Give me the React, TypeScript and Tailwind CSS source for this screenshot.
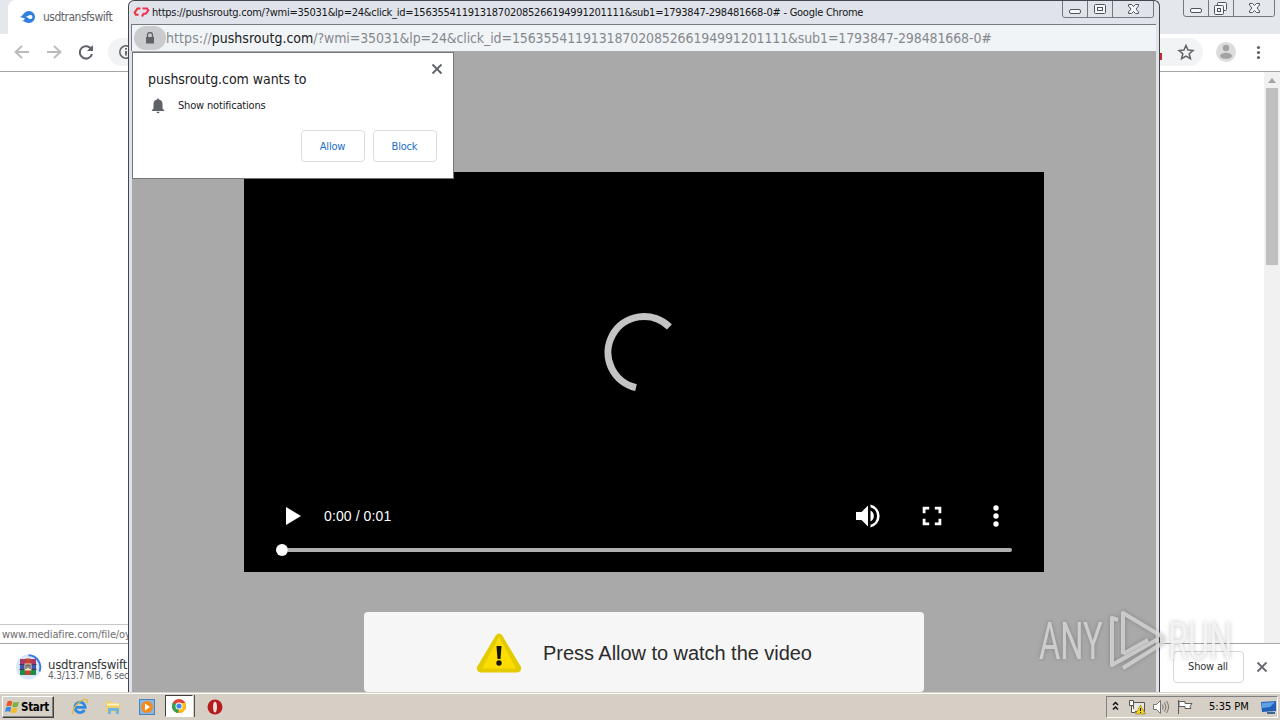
import type { ReactNode } from "react";

const QUERY = "wmi=35031&lp=24&click_id=15635541191318702085266194991201111&sub1=1793847-298481668-0#";

function CaptionButtons({ restore }: { restore?: boolean }) {
  return (
    <svg className="block" width="94" height="18" viewBox="0 0 94 18" fill="none" stroke="#50545e">
      <path d="M1.500 0V14Q1.500 16.500 4 16.500H90.500Q92.500 16.500 92.500 14V0M26.500 0V16M51.500 0V16" stroke="#73777f" />
      <rect x="8.500" y="8.500" width="11" height="4" rx="1.500" fill="#f7f8fa" />
      {restore ? (
        <g fill="#f7f8fa">
          <rect x="35.500" y="2.500" width="9" height="8" rx="1" />
          <rect x="32.500" y="5.500" width="9" height="9" rx="1" />
          <rect x="35.500" y="8.500" width="3" height="3" />
        </g>
      ) : (
        <g fill="#f7f8fa">
          <rect x="33.500" y="3.500" width="11" height="9" rx="1" />
          <rect x="36.500" y="6.500" width="5" height="3" />
        </g>
      )}
      <path d="M67.500 3.500H70.500L72.500 5.500L74.500 3.500H77.500V5L75 8L77.500 11V12.500H74.500L72.500 10.500L70.500 12.500H67.500V11L70 8L67.500 5Z" fill="#f7f8fa" />
    </svg>
  );
}

function MediafireIcon() {
  return (
    <svg width="16" height="14" viewBox="0 0 16 14">
      <path d="M0 7C3 6 4 1 9 1a6 6 0 0 1 0 12C6 13 4 11 2 11c2-.5 2-1.500 3-2.500C3.500 8 2 7.500 0 7z" fill="#2f7fdd" />
      <path d="M5.500 6.500c2 .5 3-1.500 5-1.500a2 2 0 0 1 0 4c-2 0-3-2-5-2.500z" fill="#fff" />
    </svg>
  );
}

function BrowserWindow() {
  return (
    <div className="absolute inset-0 flex flex-col bg-white">
      {/* Tab strip */}
      <div className="flex h-[34px] items-start bg-[#e4e8ec]">
        <div className="flex h-[34px] w-40 items-center rounded-tl-lg bg-white pl-3 ml-2">
          <MediafireIcon />
          <span className="ml-[7px] whitespace-nowrap text-[12px] tracking-[-0.5px] text-[#5f6368]">usdtransfswift</span>
        </div>
        <div className="ml-auto pr-1">
          <CaptionButtons restore />
        </div>
      </div>

      {/* Toolbar */}
      <div className="flex h-[38px] shrink-0 items-center border-b border-[#a6a6a6] bg-white">
        <svg width="128" height="37" viewBox="0 0 128 37" fill="none" strokeWidth="1.800">
          <path d="M29 18H16M22 12l-6.500 6 6.500 6" stroke="#bababa" />
          <path d="M47 18H60M54 12l6.500 6-6.500 6" stroke="#bababa" />
          <path d="M91.500 15.500A6.200 6.200 0 1 0 92 20" stroke="#5f6368" strokeWidth="2" />
          <path d="M93 11v6h-6z" fill="#5f6368" />
          <path d="M128 4h-6a14 14 0 0 0 0 28h6z" fill="#f1f3f4" />
          <circle cx="126" cy="18" r="6.200" stroke="#5f6368" strokeWidth="1.500" />
          <path d="M126 17v4.500M126 14v1.800" stroke="#5f6368" />
        </svg>
        <svg className="ml-auto" width="120" height="37" viewBox="0 0 120 37" fill="none">
          <path d="M0 4h29a14 14 0 0 1 0 28H0z" fill="#f1f3f4" />
          <path d="M0 19h2v7H0z" fill="#c9252d" />
          <path d="M26 11.500l2 4.600 5 .4-3.800 3.300 1.200 4.900-4.400-2.600-4.400 2.600 1.200-4.900-3.800-3.300 5-.4z" stroke="#5f6368" strokeWidth="1.500" />
          <circle cx="66" cy="18" r="10" fill="#dcdcdc" />
          <circle cx="66" cy="14" r="3.200" fill="#a3a3a3" />
          <ellipse cx="66" cy="21.800" rx="6" ry="3" fill="#a3a3a3" />
          <g fill="#5f6368">
            <circle cx="98.500" cy="13.500" r="1.600" />
            <circle cx="98.500" cy="18.500" r="1.600" />
            <circle cx="98.500" cy="23.500" r="1.600" />
          </g>
        </svg>
      </div>

      {/* Page */}
      <div className="flex min-h-0 flex-1 items-end justify-between">
        <div className="h-[19px] w-40 border-t border-[#c8c8c8] pl-0.5 whitespace-nowrap text-[11px] leading-[20px] tracking-[-0.1px] text-[#6e6e6e]">
          www.mediafire.com/file/oy
        </div>
        <div className="flex h-full w-4 flex-col items-center bg-[#f1f1f1]">
          <svg width="16" height="16" viewBox="0 0 16 16">
            <path d="M4 11l4-5 4 5z" fill="#a3a3a3" />
          </svg>
          <div className="h-[177px] w-3 bg-[#bfbfbf]" />
        </div>
      </div>

      {/* Download shelf */}
      <div className="flex h-[49px] shrink-0 border-t border-[#a6a6a6] bg-white">
        <svg className="ml-4 mt-2.5" width="26" height="28" viewBox="0 0 26 28">
          <circle cx="12.500" cy="13" r="12.500" fill="#d8e7fa" />
          <path d="M12.500 1.200A12 12 0 0 1 23.500 17.500" fill="none" stroke="#3b78e7" strokeWidth="2" />
          <path d="M4 5h16v5.500H4z" fill="#a63a6b" />
          <path d="M4 10.500h16v5H4z" fill="#3b55b5" />
          <path d="M4 15.500h16v5.500H4z" fill="#1f8a4a" />
          <path d="M9.500 4.500h5V21h-5z" fill="#c8452b" />
          <path d="M8.500 9.500h7v7h-7z" fill="#f0dfc0" />
          <path d="M10 15v-4h4v4M12 11v3" fill="none" stroke="#444" strokeWidth="1.100" />
          <path d="M3.500 10.500h5M15.500 10.500h5M3.500 15.500h5M15.500 15.500h5" stroke="#402733" strokeWidth=".8" />
        </svg>
        <div className="ml-1.5 mt-[13px] whitespace-nowrap">
          <div className="text-[13px] leading-[15px] tracking-[-0.25px] text-[#333]">usdtransfswift.</div>
          <div className="text-[10px] leading-[8px] tracking-[-0.15px] text-[#5f6368]">4.3/13.7 MB, 6 secs</div>
        </div>
        <div className="ml-auto mt-[7px] flex h-8 w-[71px] items-center justify-center rounded border border-[#d5d7da] pt-px pr-px text-[11px] tracking-[-0.2px] text-[#303236]">
          Show all
        </div>
        <svg className="ml-3 mr-3 mt-[17px]" width="12" height="12" viewBox="0 0 12 12">
          <path d="M1.500 1.500l9 9m0-9l-9 9" stroke="#66696d" strokeWidth="1.800" />
        </svg>
      </div>
    </div>
  );
}

function PermissionPrompt() {
  return (
    <div className="absolute left-0 top-px h-[127px] w-[322px] border border-[#73777b] bg-white">
      <div className="flex h-[35px] items-start justify-between pl-[15px] pr-[10px]">
        <div className="mt-4 text-[14px] leading-5 tracking-[-0.05px] text-[#202124]">pushsroutg.com wants to</div>
        <svg className="mt-[10px]" width="12" height="12" viewBox="0 0 12 12">
          <path d="M1.500 1.500l9 9m0-9l-9 9" stroke="#5f6368" strokeWidth="1.800" />
        </svg>
      </div>
      <div className="flex h-[35px] items-center pl-[18px]">
        <svg width="14" height="16" viewBox="0 0 14 16" fill="#5f6368">
          <path d="M7 .5a1.300 1.300 0 0 1 1.300 1.200A4.300 4.300 0 0 1 11.500 6v4.500l1.700 1.700V13H.8v-.8l1.700-1.700V6a4.300 4.300 0 0 1 3.200-4.300A1.300 1.300 0 0 1 7 .5zM5.500 13.700h3a1.500 1.500 0 0 1-3 0z" />
        </svg>
        <span className="ml-[13px] pt-px text-[11px] tracking-[-0.17px] text-[#202124]">Show notifications</span>
      </div>
      <div className="mt-[7px] flex justify-end gap-2 pr-4">
        {["Allow", "Block"].map((label) => (
          <button key={label} className="h-8 w-16 rounded border border-[#dadce0] pt-0.5 pr-px text-[11px] tracking-[-0.2px] text-[#1a6fc9]">
            {label}
          </button>
        ))}
      </div>
    </div>
  );
}

function VideoPlayer() {
  return (
    <div className="flex h-[400px] w-[800px] shrink-0 flex-col bg-black">
      <svg className="mx-auto mt-[140px]" width="80" height="80" viewBox="0 0 80 80" fill="none">
        <path d="M65.400 15A36 36 0 1 0 32 75.600" stroke="#c4c4c4" strokeWidth="7" />
      </svg>
      <div className="mt-auto flex h-14 items-start px-8 text-white">
        <svg width="32" height="32" viewBox="0 0 32 32">
          <path d="M10 7v18l15-9z" fill="#fff" />
        </svg>
        <span className="ml-4 font-['Liberation_Sans'] text-[14px] leading-8 tracking-[0.1px]">0:00 / 0:01</span>
        <svg className="ml-auto" width="160" height="32" viewBox="0 0 160 32" fill="#fff">
          <path d="M4 12v8h5.500l6.500 6.500v-21L9.500 12zM18.500 10.500v11a6.200 6.200 0 0 0 0-11zM18.500 4.500v2.700a9.200 9.200 0 0 1 0 17.600v2.700a11.800 11.800 0 0 0 0-23z" />
          <path d="M70.700 6.700h6.500v2.800h-3.700v3.700h-2.800zM82.800 6.700h6.500v6.500h-2.800V9.500h-3.700zM70.700 18.800h2.800v3.700h3.700v2.800h-6.500zM86.500 18.800h2.800v6.500h-6.500v-2.800h3.700z" />
          <circle cx="144" cy="8" r="2.700" />
          <circle cx="144" cy="16" r="2.700" />
          <circle cx="144" cy="24" r="2.700" />
        </svg>
      </div>
      <div className="-mt-3 mb-4 flex h-3 items-center px-8">
        <div className="size-3 rounded-full bg-white" />
        <div className="h-1 flex-1 rounded-r bg-[#b1b1b1]" />
      </div>
    </div>
  );
}

function PopupWindow() {
  return (
    <div className="absolute left-32 top-0 flex h-[692px] w-[1032px] flex-col rounded-t-md border-x border-t border-[#44464d] bg-[#e0e3e9] px-0.5">
      {/* Title bar */}
      <div className="flex h-[23px] shrink-0 items-start">
        <svg className="ml-[2px] mt-[5px]" width="17" height="12" viewBox="0 0 17 12" fill="none" strokeWidth="2.100">
          <path d="M7.500 2.500H4.500L1.700 6.500L3 8.700H5.500" stroke="#e9343c" />
          <path d="M9.500 2.500H14L15.300 4.500L12.800 7.800H10.500L9 10.500" stroke="#ee3355" />
        </svg>
        <div className="ml-0.5 mt-1 whitespace-nowrap text-[11px] leading-4 tracking-[-0.255px] text-[#15171b]">
          https://pushsroutg.com/?{QUERY} - Google Chrome
        </div>
        <div className="ml-auto mr-0.5">
          <CaptionButtons />
        </div>
      </div>

      {/* Address bar */}
      <div className="mr-px flex h-[27px] shrink-0 items-center border-l border-t border-[#777a80] bg-[#f1f4f6]">
        <div className="grid h-6 w-8 shrink-0 place-items-center rounded-full bg-[#c9cbce] ml-0.5">
          <svg width="10" height="12" viewBox="0 0 10 12">
            <path d="M1 5h8v6.500H1z" fill="#5f6368" />
            <path d="M2.500 5V3a2.500 2.500 0 0 1 5 0v2" fill="none" stroke="#5f6368" strokeWidth="1.300" />
          </svg>
        </div>
        <div className="whitespace-nowrap text-[14px] tracking-[-0.12px] text-[#85898e]">
          <span className="tracking-[0.08px]">https://</span>
          <span className="tracking-[0] text-[#202124]">pushsroutg.com</span>/?{QUERY}
        </div>
      </div>

      {/* Page */}
      <div className="relative ml-px mr-px flex min-h-0 flex-1 flex-col items-center overflow-hidden bg-[#a9a9a9] pt-[121px]">
        <VideoPlayer />
        <div className="mt-10 flex h-20 w-[560px] shrink-0 items-center rounded bg-[#f6f6f6] pl-[112px]">
          <svg className="mt-0.5" width="46" height="40" viewBox="0 0 46 40">
            <path d="M20 2Q23 -1 26 2L45 34Q46 39 41 39.500H5Q0 39 1 34z" fill="#e3cb00" />
            <path d="M23 4L40 35.500H6z" fill="#fddc00" />
            <path d="M20.500 13h5l-1 13h-3z" fill="#141414" />
            <circle cx="23" cy="30" r="2.700" fill="#141414" />
          </svg>
          <span className="ml-[21px] pt-0.5 font-['Liberation_Sans'] text-[20px] tracking-[-0.04px] text-[#2b2b2b]">Press Allow to watch the video</span>
        </div>
        <PermissionPrompt />
      </div>
    </div>
  );
}

function Watermark() {
  return (
    <div className="pointer-events-none absolute left-[1030px] top-[600px] drop-shadow-[0_0_2px_rgba(0,0,0,0.3)]">
      <svg width="220" height="80" viewBox="0 0 220 80" fill="none" opacity=".75">
        <g fontFamily="Roboto" fontSize="51" fill="#e0e0e0">
          <text transform="translate(9 59) scale(.64 1)">ANY</text>
          <text transform="translate(138 59) scale(.64 1)" fill="#f8f8f8">RUN</text>
        </g>
        <g stroke="#dedede" strokeWidth="4" strokeLinejoin="round">
          <path d="M88 20L82 18V65L89 61L128 39" />
          <path d="M93 54V13L133 37V43L93 68" />
          <path d="M93 54L118 40" />
        </g>
      </svg>
    </div>
  );
}

function TaskItem({ children }: { children: ReactNode }) {
  return <div className="grid h-6 w-[33px] place-items-center">{children}</div>;
}

function Taskbar() {
  return (
    <div className="absolute inset-x-0 bottom-0 flex h-7 items-center border-t border-[#d4d0c8] bg-[#d5cfc6] shadow-[inset_0_1px_0_#fff]">
      <div className="ml-0.5 mt-px flex h-[22px] w-[52px] items-center border border-b-[#404040] border-l-white border-r-[#404040] border-t-white bg-[#d5cfc6] pl-0.5 shadow-[inset_-1px_-1px_0_#808080]">
        <svg width="15" height="14" viewBox="0 0 15 14">
          <path d="M2.500 1.500Q5 0 7.300 1.500L6.300 6.200Q4 5 1.300 6.400z" fill="#e8562a" />
          <path d="M8.300 2Q11 3 14 1.500L12.700 6.400Q10 8 7.300 6.700z" fill="#7cb342" />
          <path d="M1 7.500Q4 6 6.200 7.300L5.200 12Q3 10.700 0 12z" fill="#3c8ae0" />
          <path d="M7 7.800Q10 9 12.500 7.500L11.300 12.200Q9 13.700 6 12.500z" fill="#f5bd1f" />
        </svg>
        <span className="ml-px pt-0.5 text-[11.500px] font-bold tracking-[-0.3px] text-black">Start</span>
      </div>
      <div className="ml-[9px] mt-px flex">
        <TaskItem>
          <svg width="18" height="18" viewBox="0 0 18 18" fill="none">
            <path d="M13.500 12A5.200 5.200 0 1 1 14.200 9.300H5" stroke="#2c8be0" strokeWidth="2.800" />
            <path d="M2.500 16.500C-1 14 6 4 13 1.700c4-1 3.700 1.500 2.800 3.500" stroke="#e2b93b" strokeWidth="1.300" />
          </svg>
        </TaskItem>
        <TaskItem>
          <svg width="16" height="16" viewBox="0 0 16 16">
            <path d="M1 2h5l1 2h8v9H1z" fill="#ecd072" />
            <path d="M2 4.500h12v2H2z" fill="#fff4bd" />
            <path d="M3 9h11v6h-3v-3H6v3H3z" fill="#6eb5df" />
          </svg>
        </TaskItem>
        <TaskItem>
          <svg className="ml-0.5" width="16" height="16" viewBox="0 0 16 16">
            <rect x=".5" y=".5" width="15" height="15" fill="#87b7e8" stroke="#4c83bb" />
            <circle cx="8" cy="8" r="6" fill="#f28a1c" />
            <path d="M6 4.500v7l5-3.500z" fill="#fff" />
          </svg>
        </TaskItem>
        <div className="ml-[3px] grid h-[22px] w-[28px] place-items-center border border-b-white border-l-[#404040] border-r-white border-t-[#404040] bg-white shadow-[1px_0_0_#d5cfc6,2px_0_0_#55524d]">
          <svg width="14" height="14" viewBox="0 0 14 14">
            <circle cx="7" cy="7" r="7" fill="#e04335" />
            <path d="M7 7L.9 3.500A7 7 0 0 0 6.500 14z" fill="#32a350" />
            <path d="M7 7L6.500 14A7 7 0 0 0 13.200 4H7z" fill="#fbc116" />
            <circle cx="7" cy="7" r="3.500" fill="#fff" />
            <circle cx="7" cy="7" r="2.600" fill="#4285f4" />
          </svg>
        </div>
        <div className="ml-[5px]">
          <TaskItem>
            <svg width="16" height="16" viewBox="0 0 16 16">
              <circle cx="8" cy="8" r="7.500" fill="#b71a1d" />
              <ellipse cx="8" cy="8" rx="2" ry="5.500" fill="#e6dfda" />
            </svg>
          </TaskItem>
        </div>
      </div>

      {/* Tray */}
      <div className="ml-auto mr-0.5 mt-px flex h-[22px] w-[172px] items-center border border-b-white border-l-[#808080] border-r-white border-t-[#808080]">
        <svg width="96" height="20" viewBox="0 0 96 20" fill="none">
          <path d="M6 8l2.500-2.500L11 8M6 12.500L8.500 10l2.500 2.500" stroke="#111" strokeWidth="1.500" />
          <path d="M26.500 5.500h11v9h-11z" fill="#e7e7e2" stroke="#55554f" />
          <path d="M22.500 3.500h4v5h-4zM24.500 8.500v7h4" fill="#fff" stroke="#55554f" />
          <path d="M33.500 8L38.500 17h-10z" fill="#f6d21c" stroke="#8d7610" strokeWidth=".6" />
          <path d="M33.500 11v3M33.500 15v1" stroke="#111" />
          <path d="M46.500 7.500h3l4-4v13l-4-4h-3z" fill="#fff" stroke="#74746f" />
          <path d="M55.500 7.500q1.500 2.500 0 5M57.500 5.500q3 4.500 0 9M59.500 4q4 6 0 12" stroke="#74746f" />
          <path d="M71.500 3v14M72 4.500h6v2h7l-2 3 1 2h-6v-2h-6z" fill="#fff" stroke="#5c5c58" />
        </svg>
        <span className="ml-1.5 pt-px whitespace-nowrap text-[11px] text-black">5:35 PM</span>
        <svg className="ml-auto" width="16" height="14" viewBox="0 0 16 14">
          <path d="M0 2l15-1v10L1 12z" fill="#225fb9" />
          <path d="M1 3l13-1-5 5-8 1z" fill="#5fa1e6" />
          <path d="M6 12h8v2H6z" fill="#44658f" />
        </svg>
      </div>
    </div>
  );
}

export default function App() {
  return (
    <div className="relative h-[720px] w-[1280px] overflow-hidden bg-white font-['DejaVu_Sans_Condensed','DejaVu_Sans',sans-serif]">
      <div className="absolute inset-x-0 top-0 h-[692px]">
        <BrowserWindow />
      </div>
      <PopupWindow />
      <Watermark />
      <Taskbar />
    </div>
  );
}
